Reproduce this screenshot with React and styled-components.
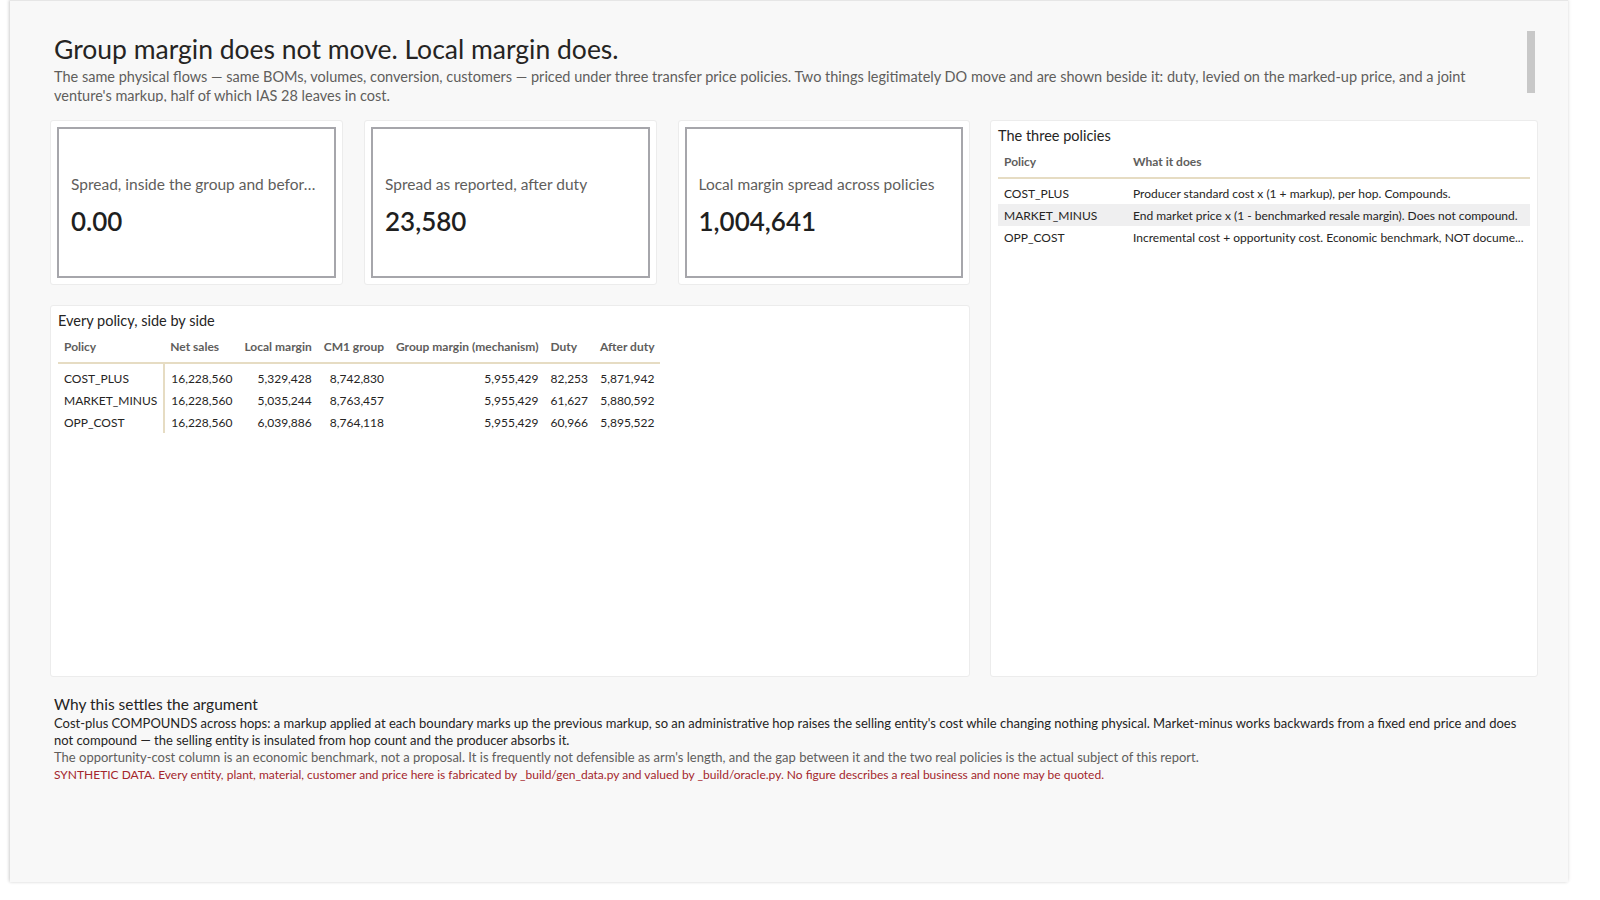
import React from "react";
import styled, { createGlobalStyle } from "styled-components";

const Global = createGlobalStyle`
  html, body { margin: 0; padding: 0; background: #fff; }
  body { font-family: "Lato", "Liberation Sans", sans-serif; color: #252423; }
`;

const Frame = styled.div`
  width: 1600px; height: 900px; display: flex; overflow: hidden;
  background: #fff;
`;
const Canvas = styled.div`
  position: relative; flex: none;
  margin-left: 10px; width: 1558px; height: 882px;
  background: #f8f8f8;
  box-shadow: -1px 0 3px rgba(0,0,0,0.12), 0 -1px 4px rgba(0,0,0,0.12);
  border-top: 1px solid #e6e6e6;
  padding: 30px 30px 0 40px; box-sizing: border-box;
  display: flex; flex-direction: column;
`;
const Scroll = styled.div`
  position: absolute; left: 1517px; top: 30px; width: 8px; height: 62px; background: #c8c8c8;
`;
const Header = styled.div` padding-left: 4px; height: 71px; overflow: hidden; `;
const Title = styled.h1`
  margin: 0; font-weight: 400; font-size: 26.5px; line-height: 36px; color: #252423;
`;
const Sub = styled.p`
  margin: 0; font-size: 14.5px; line-height: 19px; color: #605e5c; width: 1430px;
`;
const Body = styled.div`
  margin-top: 18px; display: grid; grid-template-columns: 920px 548px; column-gap: 20px;
`;
const LeftCol = styled.div` display: flex; flex-direction: column; gap: 20px; `;
const Cards = styled.div` display: flex; gap: 21px; `;
const Card = styled.div`
  width: 293px; height: 165px; box-sizing: border-box; background: #fff;
  border: 1px solid #ececec; border-radius: 3px; padding: 6px;
`;
const CardInner = styled.div`
  height: 100%; box-sizing: border-box; border: 2px solid #a6a6ab;
  display: flex; flex-direction: column; justify-content: center; padding: 6px 12px 0;
`;
const CardLabel = styled.div`
  font-size: 15.5px; color: #605e5c; white-space: nowrap; overflow: hidden; text-overflow: ellipsis;
`;
const CardValue = styled.div` font-size: 26px; font-weight: 600; color: #1f1f1f; margin-top: 12px; `;
const Panel = styled.div`
  background: #fff; border: 1px solid #ececec; border-radius: 3px; box-sizing: border-box;
  padding: 6px 7px; height: ${p => p.h}px;
`;
const PanelTitle = styled.div` font-size: 14.5px; color: #252423; margin-bottom: 6px; `;
const Table = styled.table`
  border-collapse: collapse; font-size: 12px; color: #252423;
  th { font-weight: 700; color: #605e5c; text-align: left; padding: 4px 6px 8px; white-space: nowrap;
       border-bottom: 2px solid #e6dcc3; }
  td { padding: 3px 6px; white-space: nowrap; height: 16px; }
  tbody tr:first-child td { padding-top: 6px; }
`;
const Num = styled.td` text-align: right; `;
const FirstTd = styled.td` && { border-right: 2px solid #e6dcc3; } `;
const Row = styled.tr` background: ${p => p.hl ? "#efeff0" : "transparent"}; `;
const Footer = styled.div` padding: 19px 0 0 4px; font-size: 13px; line-height: 17px; `;
const FootTitle = styled.div` font-size: 15.5px; color: #252423; margin-bottom: 2px; `;
const FootText = styled.div` color: ${p => p.c}; font-size: ${p => p.s || 13}px; `;

const rows = [
  ["COST_PLUS", "16,228,560", "5,329,428", "8,742,830", "5,955,429", "82,253", "5,871,942"],
  ["MARKET_MINUS", "16,228,560", "5,035,244", "8,763,457", "5,955,429", "61,627", "5,880,592"],
  ["OPP_COST", "16,228,560", "6,039,886", "8,764,118", "5,955,429", "60,966", "5,895,522"],
];

export default function App() {
  return (
    <Frame>
      <Global />
      <Canvas>
        <Scroll />
        <Header>
          <Title>Group margin does not move. Local margin does.</Title>
          <Sub>The same physical flows — same BOMs, volumes, conversion, customers — priced under three transfer price policies. Two things legitimately DO move and are shown beside it: duty, levied on the marked-up price, and a joint venture's markup, half of which IAS 28 leaves in cost.</Sub>
        </Header>
        <Body>
          <LeftCol>
            <Cards>
              {[["Spread, inside the group and before duty", "0.00"], ["Spread as reported, after duty", "23,580"], ["Local margin spread across policies", "1,004,641"]].map(([l, v]) => (
                <Card key={l}><CardInner><CardLabel>{l}</CardLabel><CardValue>{v}</CardValue></CardInner></Card>
              ))}
            </Cards>
            <Panel h={372}>
              <PanelTitle>Every policy, side by side</PanelTitle>
              <Table>
                <thead><tr>
                  <th>Policy</th><th>Net sales</th><th>Local margin</th><th>CM1 group</th><th>Group margin (mechanism)</th><th>Duty</th><th>After duty</th>
                </tr></thead>
                <tbody>
                  {rows.map(r => (
                    <tr key={r[0]}>
                      <FirstTd>{r[0]}</FirstTd>
                      <td>{r[1]}</td>
                      <Num>{r[2]}</Num>
                      <Num>{r[3]}</Num>
                      <Num>{r[4]}</Num>
                      <Num>{r[5]}</Num>
                      <Num>{r[6]}</Num>
                    </tr>
                  ))}
                </tbody>
              </Table>
            </Panel>
          </LeftCol>
          <Panel h={557}>
            <PanelTitle>The three policies</PanelTitle>
            <Table style={{ width: "100%" }}>
              <thead><tr><th style={{ width: 117 }}>Policy</th><th>What it does</th></tr></thead>
              <tbody>
                <Row><td>COST_PLUS</td><td>Producer standard cost x (1 + markup), per hop. Compounds.</td></Row>
                <Row hl><td>MARKET_MINUS</td><td>End market price x (1 - benchmarked resale margin). Does not compound.</td></Row>
                <Row><td>OPP_COST</td><td>Incremental cost + opportunity cost. Economic benchmark, NOT docume...</td></Row>
              </tbody>
            </Table>
          </Panel>
        </Body>
        <Footer>
          <FootTitle>Why this settles the argument</FootTitle>
          <FootText c="#252423">Cost-plus COMPOUNDS across hops: a markup applied at each boundary marks up the previous markup, so an administrative hop raises the selling entity's cost while changing nothing physical. Market-minus works backwards from a fixed end price and does not compound — the selling entity is insulated from hop count and the producer absorbs it.</FootText>
          <FootText c="#605e5c">The opportunity-cost column is an economic benchmark, not a proposal. It is frequently not defensible as arm's length, and the gap between it and the two real policies is the actual subject of this report.</FootText>
          <FootText c="#a4262c" s={12}>SYNTHETIC DATA. Every entity, plant, material, customer and price here is fabricated by _build/gen_data.py and valued by _build/oracle.py. No figure describes a real business and none may be quoted.</FootText>
        </Footer>
      </Canvas>
    </Frame>
  );
}
